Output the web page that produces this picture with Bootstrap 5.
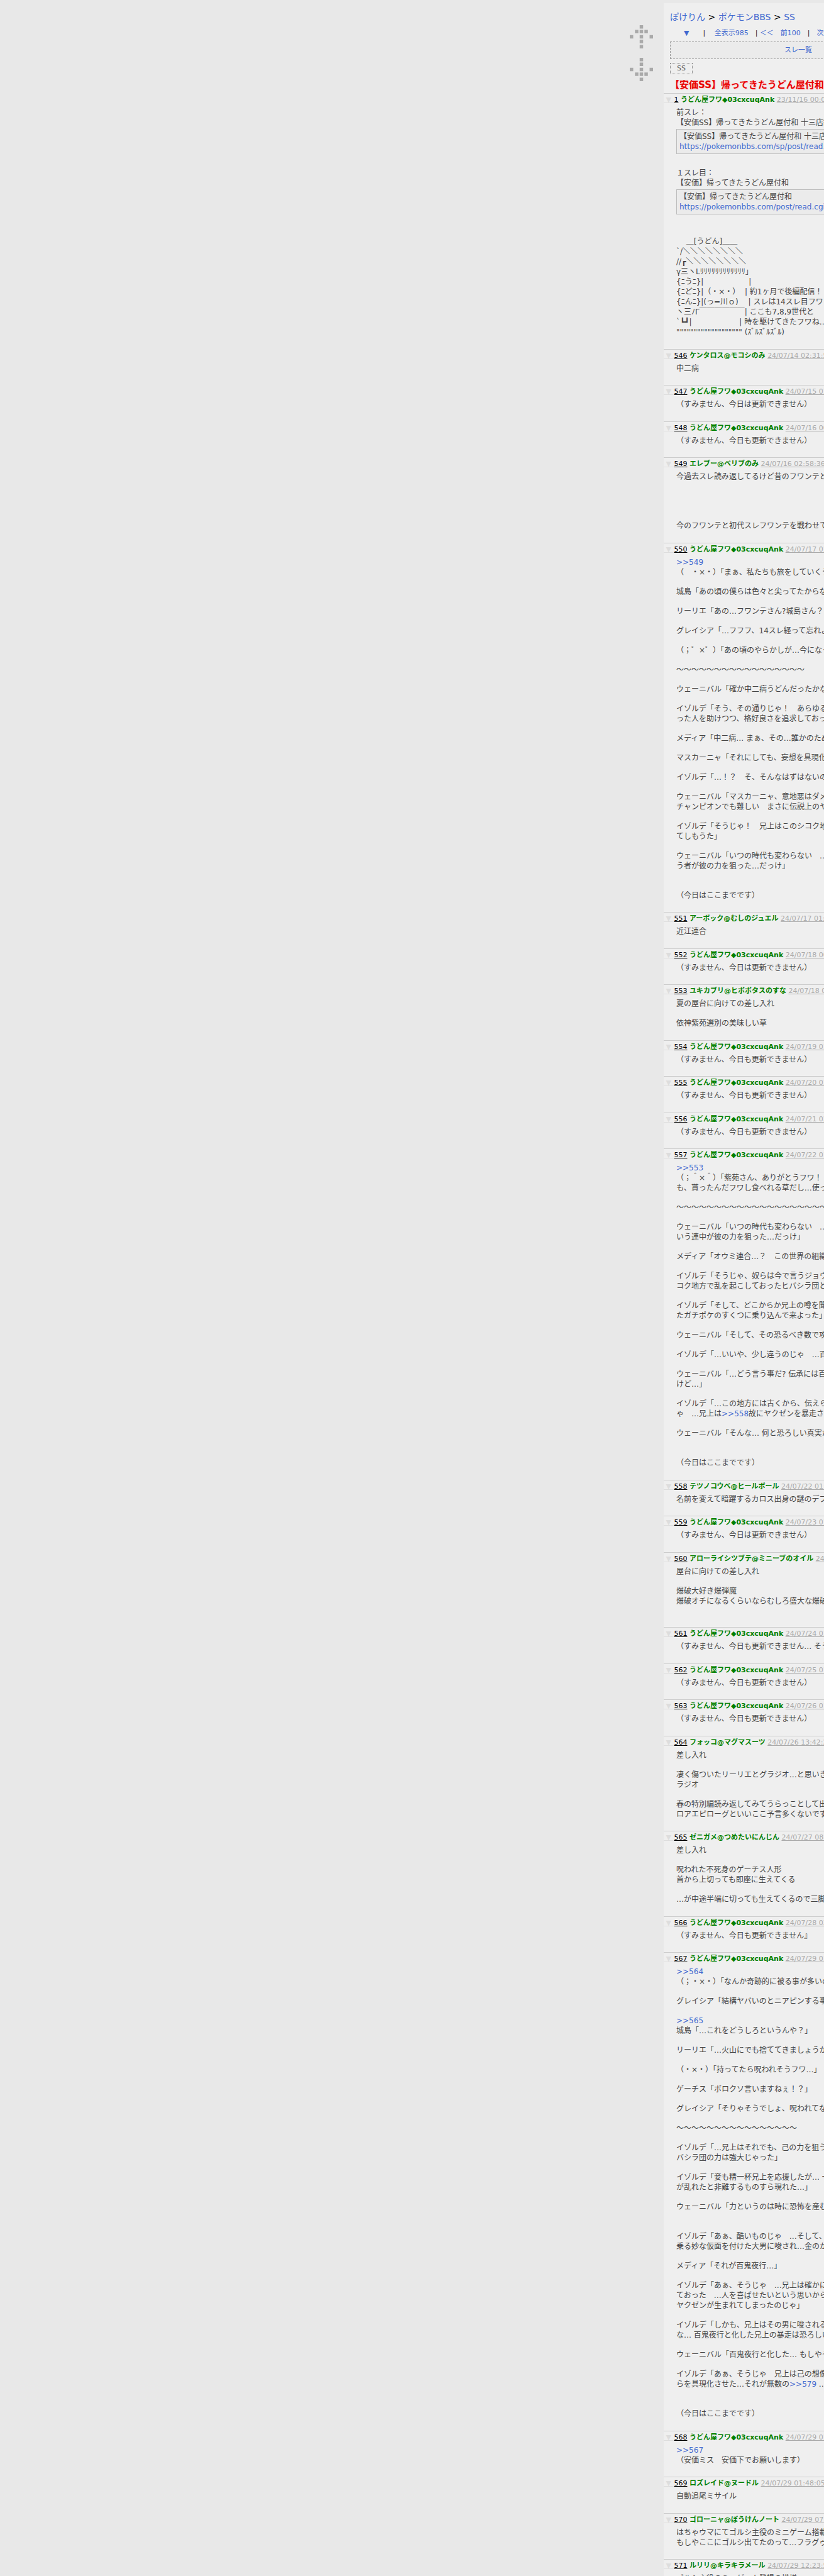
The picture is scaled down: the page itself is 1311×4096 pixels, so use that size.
<!DOCTYPE html>
<html lang="ja">
<head>
<meta charset="utf-8">
<meta name="viewport" content="width=device-width, initial-scale=1">
<title>【安価SS】帰ってきたうどん屋付和</title>
<link href="https://cdn.jsdelivr.net/npm/bootstrap@5.3.0/dist/css/bootstrap.min.css" rel="stylesheet">
<style>
body{font-family:"DejaVu Sans","Noto Sans CJK JP",sans-serif;font-size:12px;line-height:16px;color:#444;background:#e8e8e8}
a{color:#4169cf;text-decoration:none}
.page-wrap{height:100vh}
.jump-links{padding:40px 17px 0 0;gap:15px}
.jump-links svg{display:block;width:37px;height:37px;fill:#aaa}
.board{width:255px;margin-top:5px;background:#efefef}
.sheet{width:428px;white-space:nowrap}
.board-top{padding:12px 10px 2px}
.crumbs{font-size:14px;line-height:20px;margin-bottom:8px;color:#000}
.pager{font-size:11px;color:#222;margin-bottom:5px}
.list-link{font-size:11px;line-height:26px;border:1px dashed #999;background:#ebebeb}
.cat-tag{font-size:11px;line-height:16px;border:1px dotted #888;padding:0 10px;color:#666;margin:6px 0}
.thread-title{font-size:15px;line-height:22px;font-weight:700;color:#e80000;margin:0;text-shadow:1px 1px 1px #fcc}
.post{border-top:1px solid #ccc;padding-bottom:19px}
.post:nth-of-type(even){padding-bottom:18px}
.post-head{font-size:11px;line-height:18px;padding-top:1px;margin-bottom:3px}
.post-head a{text-decoration:underline}
.post-head .fold{color:#ddd;margin-right:1px}
.post-head .num{color:#000}
.who{color:#008000;font-weight:700}
.when{color:#aaa;text-decoration:underline}
.post-body{padding-left:20px}
.post-body p{margin:0 0 15px}
.post-body p:last-child{margin-bottom:0}
.post-body p.far{margin-bottom:31px}
.post-body p.farther{margin-bottom:62px}
.post-body p.tail{margin-bottom:15px}
.link-card{border:1px solid #bbb;background:#ebebeb;padding:3px 4px;margin:2px 0 22px}
.link-card.wide-gap{margin-bottom:35px}
</style>
<script src="https://cdn.jsdelivr.net/npm/bootstrap@5.3.0/dist/js/bootstrap.bundle.min.js"></script>
</head>
<body>
<div class="page-wrap d-flex align-items-stretch overflow-hidden">
<nav class="jump-links flex-grow-1 d-flex flex-column align-items-end" aria-label="移動">
<a href="#top" aria-label="上へ"><svg viewBox="0 0 54 54"><path d="M23 0h8v8h-8zM12 11h8v8h-8zM23 11h8v8h-8zM34 11h8v8h-8zM0 23h8v8h-8zM23 23h8v8h-8zM46 23h8v8h-8zM23 34h8v8h-8zM23 46h8v8h-8z"/></svg></a>
<a href="#bottom" aria-label="下へ"><svg viewBox="0 0 54 54"><path d="M23 0h8v8h-8zM23 11h8v8h-8zM0 23h8v8h-8zM23 23h8v8h-8zM46 23h8v8h-8zM12 34h8v8h-8zM23 34h8v8h-8zM34 34h8v8h-8zM23 46h8v8h-8z"/></svg></a>
</nav>
<main class="board flex-shrink-0 overflow-hidden" id="top">
<div class="sheet">
<header class="board-top">
<div class="crumbs"><a href="#">ぽけりん</a> &gt; <a href="#">ポケモンBBS</a> &gt; <a href="#">SS</a></div>
<div class="pager">　　<a href="#bottom">▼</a>　　|　 <a href="#">全表示985</a>　| <a href="#">＜＜　前100</a>　|　<a href="#">次100</a></div>
<div class="list-link text-center"><a href="#">スレ一覧</a></div>
<div class="d-flex"><span class="cat-tag">SS</span></div>
<h1 class="thread-title">【安価SS】帰ってきたうどん屋付和</h1>
</header>

<article class="post"><div class="post-head"><a class="fold" href="#">&nbsp;▼&nbsp;</a><a class="num" href="#">1</a> <span class="who">うどん屋フワ◆03cxcuqAnk</span> <span class="when">23/11/16 00:06:00</span></div>
<div class="post-body">前スレ：<br>【安価SS】帰ってきたうどん屋付和 十三店舗
<div class="link-card">【安価SS】帰ってきたうどん屋付和 十三店舗<br><a href="#">https://pokemonbbs.com/sp/post/read.cgi</a></div>
１スレ目：<br>【安価】帰ってきたうどん屋付和
<div class="link-card wide-gap">【安価】帰ってきたうどん屋付和<br><a href="#">https://pokemonbbs.com/post/read.cgi?no</a></div>
<p>　&nbsp;＿[うどん]＿＿<br>`/＼＼＼＼＼＼＼＼<br>//┏＼＼＼＼＼＼＼＼<br>γ三ヽLﾘﾘﾘﾘﾘﾘﾘﾘﾘﾘﾘﾘ｣<br>{ﾆうﾆ}|　　　　　　|<br>{ﾆどﾆ}|（・×・）&nbsp;&nbsp;| 約1ヶ月で後編配信！<br>{ﾆんﾆ}|(っ=川ｏ)　&nbsp;| スレは14スレ目フワ！<br>ヽ三ﾉΓ￣￣￣￣￣￣| ここも7,8,9世代と<br>`┗┛|　　　　　　&nbsp;| 時を駆けてきたフワね…<br>""""""""""""""""""" (ｽﾞﾙｽﾞﾙｽﾞﾙ)</p></div></article>

<article class="post"><div class="post-head"><a class="fold" href="#">&nbsp;▼&nbsp;</a><a class="num" href="#">546</a> <span class="who">ケンタロス@モコシのみ</span> <span class="when">24/07/14 02:31:57</span></div>
<div class="post-body"><p>中二病</p></div></article>

<article class="post"><div class="post-head"><a class="fold" href="#">&nbsp;▼&nbsp;</a><a class="num" href="#">547</a> <span class="who">うどん屋フワ◆03cxcuqAnk</span> <span class="when">24/07/15 01:00</span></div>
<div class="post-body"><p>（すみません、今日は更新できません）</p></div></article>

<article class="post"><div class="post-head"><a class="fold" href="#">&nbsp;▼&nbsp;</a><a class="num" href="#">548</a> <span class="who">うどん屋フワ◆03cxcuqAnk</span> <span class="when">24/07/16 00:00</span></div>
<div class="post-body"><p>（すみません、今日も更新できません）</p></div></article>

<article class="post"><div class="post-head"><a class="fold" href="#">&nbsp;▼&nbsp;</a><a class="num" href="#">549</a> <span class="who">エレブー@ベリブのみ</span> <span class="when">24/07/16 02:58:36</span> <a href="#">ID</a></div>
<div class="post-body"><p class="farther">今過去スレ読み返してるけど昔のフワンテと城島</p><p>今のフワンテと初代スレフワンテを戦わせてみ</p></div></article>

<article class="post"><div class="post-head"><a class="fold" href="#">&nbsp;▼&nbsp;</a><a class="num" href="#">550</a> <span class="who">うどん屋フワ◆03cxcuqAnk</span> <span class="when">24/07/17 01:00</span></div>
<div class="post-body"><p><a href="#">&gt;&gt;549</a><br>（　・×・）「まぁ、私たちも旅をしていくう</p>
<p>城島「あの頃の僕らは色々と尖ってたからなぁ</p>
<p>リーリエ「あの…フワンテさん?城島さん？</p>
<p>グレイシア「…フフフ、14スレ経って忘れよ</p>
<p>（；゜×゜）「あの頃のやらかしが…今になっ</p>
<p>～～～～～～～～～～～～～～～～～</p>
<p>ウェーニバル「確か中二病うどんだったかな</p>
<p>イゾルデ「そう、その通りじゃ！　あらゆる妄<br>った人を助けつつ、格好良さを追求しておった</p>
<p>メディア「中二病… まぁ、その…誰かのため</p>
<p>マスカーニャ「それにしても、妄想を具現化っ</p>
<p>イゾルデ「…！？　そ、そんなはずはないのじ</p>
<p>ウェーニバル「マスカーニャ、意地悪はダメだ<br>チャンピオンでも難しい　まさに伝説上のヤク</p>
<p>イゾルデ「そうじゃ！　兄上はこのシコク地方<br>てしもうた」</p>
<p class="far">ウェーニバル「いつの時代も変わらない　…力<br>う者が彼の力を狙った…だっけ」</p>
<p>（今日はここまでです）</p></div></article>

<article class="post"><div class="post-head"><a class="fold" href="#">&nbsp;▼&nbsp;</a><a class="num" href="#">551</a> <span class="who">アーボック@むしのジュエル</span> <span class="when">24/07/17 01:4</span></div>
<div class="post-body"><p>近江連合</p></div></article>

<article class="post"><div class="post-head"><a class="fold" href="#">&nbsp;▼&nbsp;</a><a class="num" href="#">552</a> <span class="who">うどん屋フワ◆03cxcuqAnk</span> <span class="when">24/07/18 00:00</span></div>
<div class="post-body"><p>（すみません、今日は更新できません）</p></div></article>

<article class="post"><div class="post-head"><a class="fold" href="#">&nbsp;▼&nbsp;</a><a class="num" href="#">553</a> <span class="who">ユキカブリ@ヒポポタスのすな</span> <span class="when">24/07/18 09:00</span></div>
<div class="post-body"><p>夏の屋台に向けての差し入れ</p><p>依神紫苑選別の美味しい草</p></div></article>

<article class="post"><div class="post-head"><a class="fold" href="#">&nbsp;▼&nbsp;</a><a class="num" href="#">554</a> <span class="who">うどん屋フワ◆03cxcuqAnk</span> <span class="when">24/07/19 01:00</span></div>
<div class="post-body"><p>（すみません、今日も更新できません）</p></div></article>

<article class="post"><div class="post-head"><a class="fold" href="#">&nbsp;▼&nbsp;</a><a class="num" href="#">555</a> <span class="who">うどん屋フワ◆03cxcuqAnk</span> <span class="when">24/07/20 01:00</span></div>
<div class="post-body"><p>（すみません、今日も更新できません）</p></div></article>

<article class="post"><div class="post-head"><a class="fold" href="#">&nbsp;▼&nbsp;</a><a class="num" href="#">556</a> <span class="who">うどん屋フワ◆03cxcuqAnk</span> <span class="when">24/07/21 02:00</span></div>
<div class="post-body"><p>（すみません、今日も更新できません）</p></div></article>

<article class="post"><div class="post-head"><a class="fold" href="#">&nbsp;▼&nbsp;</a><a class="num" href="#">557</a> <span class="who">うどん屋フワ◆03cxcuqAnk</span> <span class="when">24/07/22 01:00</span></div>
<div class="post-body"><p><a href="#">&gt;&gt;553</a><br>（；＾×＾）「紫苑さん、ありがとうフワ！<br>も、貰ったんだフワし食べれる草だし…使って</p>
<p>～～～～～～～～～～～～～～～～～～～～～～</p>
<p>ウェーニバル「いつの時代も変わらない　…力<br>いう連中が彼の力を狙った…だっけ」</p>
<p>メディア「オウミ連合…？　この世界の組織で</p>
<p>イゾルデ「そうじゃ、奴らは今で言うジョウト<br>コク地方で乱を起こしておったヒバシラ団と手</p>
<p>イゾルデ「そして、どこからか兄上の噂を聞き<br>たガチポケのすくつに乗り込んで来よった」</p>
<p>ウェーニバル「そして、その恐るべき数で攻め</p>
<p>イゾルデ「…いいや、少し違うのじゃ　…百鬼</p>
<p>ウェーニバル「…どう言う事だ? 伝承には百鬼<br>けど…」</p>
<p>イゾルデ「…この地方には古くから、伝えられ<br>ゃ　…兄上は<a href="#">&gt;&gt;558</a>故にヤクゼンを暴走させ</p>
<p class="far">ウェーニバル「そんな… 何と恐ろしい真実だ</p>
<p>（今日はここまでです）</p></div></article>

<article class="post"><div class="post-head"><a class="fold" href="#">&nbsp;▼&nbsp;</a><a class="num" href="#">558</a> <span class="who">テツノコウベ@ヒールボール</span> <span class="when">24/07/22 01:3</span></div>
<div class="post-body"><p>名前を変えて暗躍するカロス出身の謎のデブい</p></div></article>

<article class="post"><div class="post-head"><a class="fold" href="#">&nbsp;▼&nbsp;</a><a class="num" href="#">559</a> <span class="who">うどん屋フワ◆03cxcuqAnk</span> <span class="when">24/07/23 01:00</span></div>
<div class="post-body"><p>（すみません、今日は更新できません）</p></div></article>

<article class="post"><div class="post-head"><a class="fold" href="#">&nbsp;▼&nbsp;</a><a class="num" href="#">560</a> <span class="who">アローライシツブテ@ミニーブのオイル</span> <span class="when">24/07/23</span></div>
<div class="post-body"><p>屋台に向けての差し入れ</p><p class="tail">爆破大好き爆弾魔<br>爆破オチになるくらいならむしろ盛大な爆破を</p></div></article>

<article class="post"><div class="post-head"><a class="fold" href="#">&nbsp;▼&nbsp;</a><a class="num" href="#">561</a> <span class="who">うどん屋フワ◆03cxcuqAnk</span> <span class="when">24/07/24 01:00</span></div>
<div class="post-body"><p>（すみません、今日も更新できません… そう</p></div></article>

<article class="post"><div class="post-head"><a class="fold" href="#">&nbsp;▼&nbsp;</a><a class="num" href="#">562</a> <span class="who">うどん屋フワ◆03cxcuqAnk</span> <span class="when">24/07/25 01:00</span></div>
<div class="post-body"><p>（すみません、今日も更新できません）</p></div></article>

<article class="post"><div class="post-head"><a class="fold" href="#">&nbsp;▼&nbsp;</a><a class="num" href="#">563</a> <span class="who">うどん屋フワ◆03cxcuqAnk</span> <span class="when">24/07/26 01:00</span></div>
<div class="post-body"><p>（すみません、今日も更新できません）</p></div></article>

<article class="post"><div class="post-head"><a class="fold" href="#">&nbsp;▼&nbsp;</a><a class="num" href="#">564</a> <span class="who">フォッコ@マグマスーツ</span> <span class="when">24/07/26 13:42:26</span></div>
<div class="post-body"><p>差し入れ</p><p>凄く傷ついたリーリエとグラジオ…と思いきや<br>ラジオ</p><p>春の特別編読み返してみてうらっことして出て<br>ロアエピローグといいここ予言多くないですか</p></div></article>

<article class="post"><div class="post-head"><a class="fold" href="#">&nbsp;▼&nbsp;</a><a class="num" href="#">565</a> <span class="who">ゼニガメ@つめたいにんじん</span> <span class="when">24/07/27 08:5</span></div>
<div class="post-body"><p>差し入れ</p><p>呪われた不死身のゲーチス人形<br>首から上切っても即座に生えてくる</p><p>…が中途半端に切っても生えてくるので三脚ゲ</p></div></article>

<article class="post"><div class="post-head"><a class="fold" href="#">&nbsp;▼&nbsp;</a><a class="num" href="#">566</a> <span class="who">うどん屋フワ◆03cxcuqAnk</span> <span class="when">24/07/28 02:00</span></div>
<div class="post-body"><p>（すみません、今日も更新できません』</p></div></article>

<article class="post"><div class="post-head"><a class="fold" href="#">&nbsp;▼&nbsp;</a><a class="num" href="#">567</a> <span class="who">うどん屋フワ◆03cxcuqAnk</span> <span class="when">24/07/29 01:00</span></div>
<div class="post-body"><p><a href="#">&gt;&gt;564</a><br>（；・×・）「なんか奇跡的に被る事が多いの</p>
<p>グレイシア「結構ヤバいのとニアピンする事も</p>
<p><a href="#">&gt;&gt;565</a><br>城島「…これをどうしろというんや？」</p>
<p>リーリエ「…火山にでも捨ててきましょうか」</p>
<p>（・×・）「持ってたら呪われそうフワ…」</p>
<p>ゲーチス「ボロクソ言いますねぇ！？」</p>
<p>グレイシア「そりゃそうでしょ、呪われてなく</p>
<p>～～～～～～～～～～～～～～～～</p>
<p>イゾルデ「…兄上はそれでも、己の力を狙う者<br>バシラ団の力は強大じゃった」</p>
<p>イゾルデ「妾も精一杯兄上を応援したが… 一<br>が乱れたと非難するものすら現れた…」</p>
<p class="far">ウェーニバル「力というのは時に恐怖を産む…</p>
<p>イゾルデ「あぁ、酷いものじゃ　…そして、耐<br>乗る妙な仮面を付けた大男に唆され…金のかけ</p>
<p>メディア「それが百鬼夜行…」</p>
<p>イゾルデ「あぁ、そうじゃ　…兄上は確かにマ<br>ておった　…人を喜ばせたいという思いから生<br>ヤクゼンが生まれてしまったのじゃ」</p>
<p>イゾルデ「しかも、兄上はその男に唆される前<br>な… 百鬼夜行と化した兄上の暴走は恐ろしい</p>
<p>ウェーニバル「百鬼夜行と化した… もしやそ</p>
<p class="far">イゾルデ「あぁ、そうじゃ　兄上は己の想像を<br>らを具現化させた…それが無数の<a href="#">&gt;&gt;579</a> …百</p>
<p>（今日はここまでです）</p></div></article>

<article class="post"><div class="post-head"><a class="fold" href="#">&nbsp;▼&nbsp;</a><a class="num" href="#">568</a> <span class="who">うどん屋フワ◆03cxcuqAnk</span> <span class="when">24/07/29 01:00</span></div>
<div class="post-body"><p><a href="#">&gt;&gt;567</a><br>（安価ミス　安価下でお願いします）</p></div></article>

<article class="post"><div class="post-head"><a class="fold" href="#">&nbsp;▼&nbsp;</a><a class="num" href="#">569</a> <span class="who">ロズレイド@ヌードル</span> <span class="when">24/07/29 01:48:05</span> <a href="#">ID</a></div>
<div class="post-body"><p>自動追尾ミサイル</p></div></article>

<article class="post"><div class="post-head"><a class="fold" href="#">&nbsp;▼&nbsp;</a><a class="num" href="#">570</a> <span class="who">ゴローニャ@ぼうけんノート</span> <span class="when">24/07/29 07:5</span></div>
<div class="post-body"><p>はちゃウマにてゴルシ主役のミニゲーム搭載と<br>もしやここにゴルシ出てたのって…フラグゥ？</p></div></article>

<article class="post" id="bottom"><div class="post-head"><a class="fold" href="#">&nbsp;▼&nbsp;</a><a class="num" href="#">571</a> <span class="who">ルリリ@キラキラメール</span> <span class="when">24/07/29 12:23:59</span></div>
<div class="post-body"><p>ゴルシ主役のミニゲーム登場の模様</p></div></article>
</div>
</main>
</div>
</body>
</html>
